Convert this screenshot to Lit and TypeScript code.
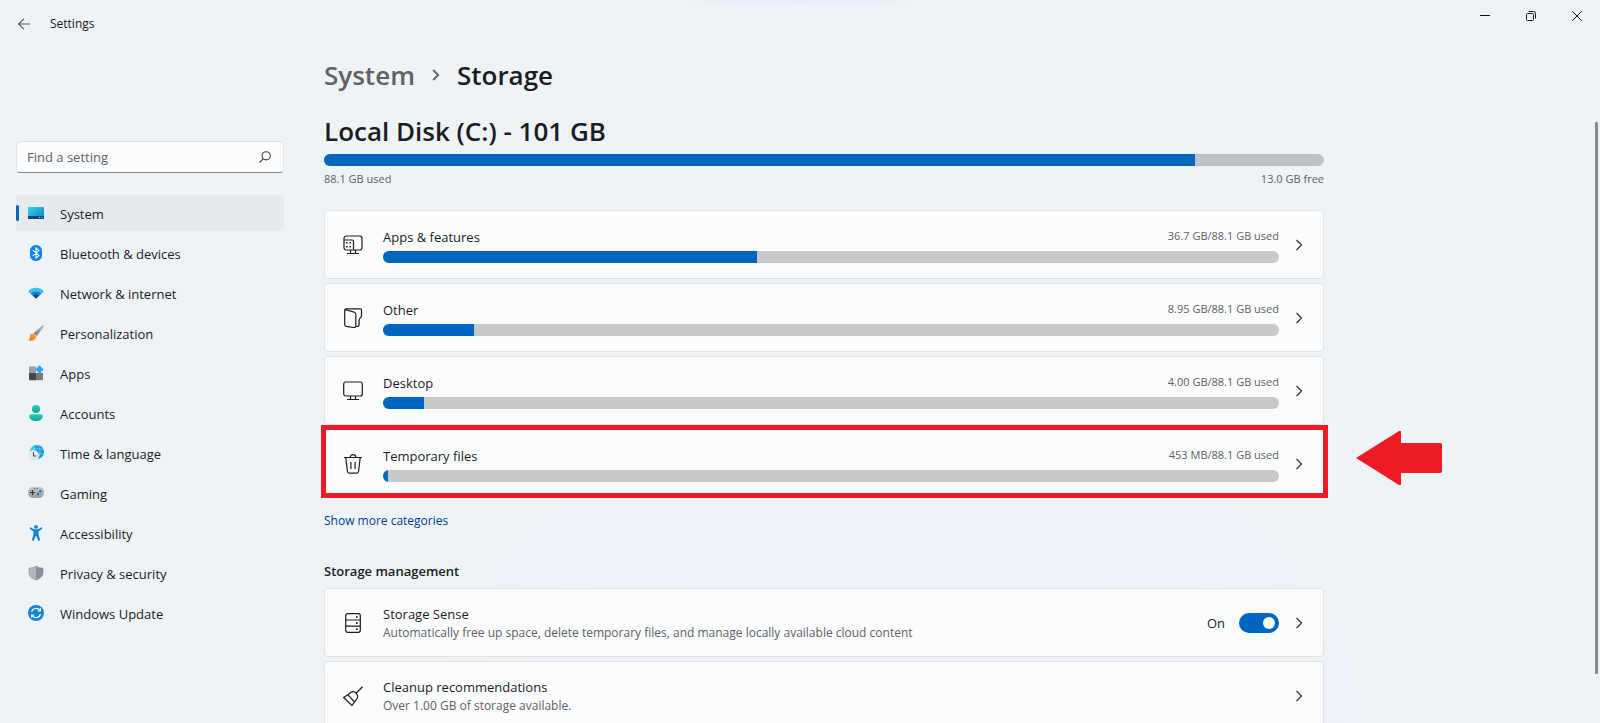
import { LitElement, html, css, svg, nothing } from "lit";
import { customElement, property, state } from "lit/decorators.js";
import { classMap } from "lit/directives/class-map.js";

const chevron = html`<svg class="chevron" width="16" height="16" viewBox="0 0 16 16" aria-hidden="true">
  <path d="M5.500 3 10.500 8l-5 5" fill="none" stroke="#303234" stroke-width="1.200" />
</svg>`;

const navIcons: Record<string, unknown> = {
  system: svg`
    <defs><linearGradient id="sys" x1="0" y1="0" x2="1" y2="1">
      <stop offset="0" stop-color="#35d8e8"/><stop offset="1" stop-color="#0f7bc9"/></linearGradient></defs>
    <rect x="0" y="2" width="16" height="12" rx="0.8" fill="url(#sys)"/>
    <path d="M0 11h16v2.2a.8.8 0 0 1-.8.8H.8a.8.8 0 0 1-.8-.8z" fill="#0b4a73"/>
    <path d="M11 12h1v1h-1zM13.2 12h1v1h-1z" fill="#b9e6f7"/>`,
  bluetooth: svg`
    <rect x="2" y="0" width="12" height="16" rx="5.6" fill="#0a84f5"/>
    <path d="M4.8 5.2 11 10.5 8 13V3l3 2.5-6.2 5.3" fill="none" stroke="#fff" stroke-width="1.1"/>`,
  network: svg`
    <path d="M0 6.200C4.400 1.600 11.600 1.600 16 6.200L13.600 8.600C10.500 5.600 5.500 5.600 2.400 8.600z" fill="#35c3ef"/>
    <path d="M2.400 8.600C5.500 5.400 10.500 5.400 13.600 8.600L11.500 10.600C9.500 8.700 6.500 8.700 4.500 10.600z" fill="#1584d8"/>
    <path d="M4.500 10.600C6.500 8.500 9.500 8.500 11.500 10.600L8 13.800z" fill="#0d4f9e"/>`,
  personalization: svg`
    <defs><linearGradient id="brush" x1="1" y1="0" x2="0" y2="1">
      <stop offset="0" stop-color="#c3c8cc"/><stop offset="1" stop-color="#6d747b"/></linearGradient>
      <linearGradient id="paint" x1="1" y1="0" x2="0" y2="1">
      <stop offset="0" stop-color="#ffad3b"/><stop offset="1" stop-color="#ee6a10"/></linearGradient></defs>
    <path d="M14.300.3c.9-.6 2.100.4 1.500 1.400L8.800 11 5.600 8.200z" fill="url(#brush)"/>
    <path d="M5.300 8.300 8.400 11.200C8.300 14.800 4 16.600.2 15.300 2 14.500 1.600 13 2 11c.4-1.800 2-2.900 3.300-2.700z" fill="url(#paint)"/>`,
  apps: svg`
    <path d="M1 1.500h7V8H1z" fill="#98a1a8"/><path d="M1 8h7v7.200H1.800a.8.8 0 0 1-.8-.8z" fill="#45494d"/>
    <path d="M8 8h7v6.400a.8.8 0 0 1-.8.8H8z" fill="#757b80"/>
    <rect x="8.500" y="1.500" width="6" height="6" rx="0.8" transform="rotate(45 11.500 4.500)" fill="#2aa7ee"/>`,
  accounts: svg`
    <defs><linearGradient id="acc" x1="0" y1="0" x2="0" y2="1">
      <stop offset="0" stop-color="#28cdb8"/><stop offset="1" stop-color="#12a596"/></linearGradient></defs>
    <circle cx="8" cy="4" r="4" fill="url(#acc)"/>
    <path d="M3 9.300h10c1 0 1.800.7 1.800 1.700 0 3-3 5-6.800 5s-6.800-2-6.800-5c0-1 .8-1.700 1.800-1.700z" fill="url(#acc)"/>`,
  time: svg`
    <circle cx="9" cy="7" r="7" fill="#1a94dc"/>
    <path d="M9 0a7 7 0 0 0-7 7h5c0-3 .6-5.500 2-7z" fill="#34c8df"/>
    <path d="M9 0c2 1.600 3 4 3 7s-1 5.400-3 7M3 4h12M9 8.800h6.500" fill="none" stroke="#63daf0" stroke-width="0.800"/>
    <circle cx="5.500" cy="10.500" r="5.500" fill="#e6e7e9"/>
    <path d="M5.500 7.200v3.800h2.800" fill="none" stroke="#45494d" stroke-width="1.100"/>`,
  gaming: svg`
    <defs><linearGradient id="pad" x1="0" y1="0" x2="0" y2="1">
      <stop offset="0" stop-color="#c2c5c9"/><stop offset="1" stop-color="#999da3"/></linearGradient></defs>
    <rect x="0" y="2" width="16" height="11" rx="5" fill="url(#pad)"/>
    <path d="M4.500 5v5M2 7.500h5" stroke="#2e3236" stroke-width="1.200"/>
    <path d="M6.200 3h1v1h-1zM8.800 3h1v1h-1z" fill="#4b4f53"/>
    <circle cx="10" cy="9" r="1.200" fill="#1670c4"/><circle cx="12.300" cy="6.200" r="1.200" fill="#1670c4"/>`,
  accessibility: svg`
    <circle cx="8" cy="1.900" r="1.900" fill="#1583db"/>
    <path d="M2.500 1.900C4 3.300 5.800 4.200 8 4.200s4-.9 5.500-2.300l1 1.400C13 4.900 11.700 5.800 10.600 6.200V9.500l1.600 5.700-1.800.8L8.300 11h-.6l-2.100 5-1.800-.8 1.600-5.700V6.200C4.300 5.800 3 4.900 1.500 3.300z" fill="#1583db"/>`,
  privacy: svg`
    <path d="M8 1C6 2.400 3.800 3 1 3v4.800C1 11.500 4 13.800 8 15z" fill="#b3b7bc"/>
    <path d="M8 1c2 1.400 4.200 2 7 2v4.800c0 3.700-3 6-7 7.200z" fill="#8c9198"/>
    <path d="M8 1c2 1.400 4.200 2 7 2v4.800c0 3.700-3 6-7 7.200-4-1.200-7-3.500-7-7.200V3c2.800 0 5-.6 7-2z" fill="none" stroke="#8a8f95" stroke-width="0.600"/>`,
  update: svg`
    <circle cx="8" cy="8" r="8" fill="#1583db"/>
    <path d="M3.600 7A4.600 4.600 0 0 1 12 5.600M12.400 9A4.600 4.600 0 0 1 4 10.400" fill="none" stroke="#fff" stroke-width="1.200"/>
    <path d="M12.400 3.200V6H9.600M3.600 12.800V10h2.800" fill="none" stroke="#fff" stroke-width="1.200"/>`,
};

const cardIcons: Record<string, unknown> = {
  apps: svg`
    <path d="M1 5V3.200C1 2 1.800 1 3.200 1h13.600C18 1 19 2 19 3.200v9.600c0 1.300-1 2.200-2.200 2.200H3.200C1.900 15 1 14 1 12.800V5h8.200c.8 0 1.300.5 1.300 1.300V15M7.500 15v3.400M12.500 15v3.400M4 18.500h12"/>
    <path d="M3 7h1.500v1.500H3zM6.500 7H8v1.500H6.500zM3 11h1.500v1.500H3zM6.500 11H8v1.500H6.500z" fill="#1b1c1d" stroke="none"/>`,
  other: svg`
    <path d="M1.700 2.500v14c0 1 .5 1.700 1.500 1.900l7.600 1.100c1.300.2 2-.6 2-1.700V6.200c0-1-.5-1.700-1.500-2L3.200 2C2.300 1.700 1.700 2 1.700 3V1.800C1.700 1.200 2.200.8 3 .8h14.200c.8 0 1.300.4 1.300 1.200v5.500c0 .8-.3 1.200-.8 1.900l-1 1.200c-.4.5-.6 1-.6 1.700v4c0 1.200-.8 2.200-2 2.200h-1.300"/>`,
  desktop: svg`
    <rect x="0.700" y="1" width="18.600" height="14" rx="2"/><path d="M7.500 15v3.500M12.500 15v3.500M4 18.500h12"/>`,
  trash: svg`
    <path d="M1 3.500h18M7.200 3.300C7.200 1.700 8.400.7 10 .7s2.800 1 2.800 2.600M2.800 3.500l1.600 13.800c.1 1.100.9 1.900 2 1.900h7.200c1.100 0 1.900-.8 2-1.900l1.600-13.800M7.900 8v7M12.100 8v7"/>`,
  drive: svg`
    <rect x="2.700" y="0.700" width="14.600" height="18.600" rx="2"/><path d="M2.700 7h14.600M2.700 13.200h14.600"/>
    <path d="M13 3.200h1.700v1.600H13zM13 9.300h1.700v1.600H13zM13 15.500h1.700v1.600H13z" fill="#1b1c1d" stroke="none"/>`,
  broom: svg`
    <path d="M19.600.7 13.300 7M6.500 7.500.7 11.500l8.200 8 4.400-5.800M6.500 7.500c2-2.100 4.700-2.200 6.500-.5 1.900 1.900 2.100 4.500.3 6.700M4.800 8.700l6.700 7.300"/>`,
};

interface Category {
  name: string;
  usage: string;
  percent: number;
  icon: string;
  marked?: boolean;
}

const shared = css`
  * { box-sizing: border-box; }
  button, input { font: inherit; color: inherit; }
  button { background: none; border: 0; padding: 0; text-align: left; }
  a { color: inherit; text-decoration: none; }
  h1, h2, h3, p { margin: 0; }
  svg { display: block; flex: none; }
`;

@customElement("usage-bar")
class UsageBar extends LitElement {
  @property({ type: Number }) percent = 0;
  @property() label = "";

  static styles = css`
    :host { display: block; }
    .track { height: 12px; border-radius: 6px; background: var(--track, #c8c9c8); overflow: hidden; }
    .fill { height: 100%; background: #0067c0; }
  `;

  render() {
    return html`<div class="track" role="progressbar" aria-label=${this.label} aria-valuenow=${this.percent}>
      <div class="fill" style="width:${this.percent}%"></div>
    </div>`;
  }
}

@customElement("settings-nav")
class SettingsNav extends LitElement {
  @state() private current = "system";

  private items = [
    ["system", "System"],
    ["bluetooth", "Bluetooth & devices"],
    ["network", "Network & internet"],
    ["personalization", "Personalization"],
    ["apps", "Apps"],
    ["accounts", "Accounts"],
    ["time", "Time & language"],
    ["gaming", "Gaming"],
    ["accessibility", "Accessibility"],
    ["privacy", "Privacy & security"],
    ["update", "Windows Update"],
  ];

  static styles = [shared, css`
    :host { display: block; }
    .search {
      display: flex; align-items: center; height: 32px; padding: 0 12px 0 10px;
      background: #fbfcfe; border: 1px solid #dfe4e9; border-bottom-color: #83878a; border-radius: 4px;
    }
    .search input {
      flex: 1; min-width: 0; border: 0; outline: 0; background: none; padding: 0; line-height: 20px;
    }
    .search input::placeholder { color: #626467; opacity: 1; }
    nav { display: flex; flex-direction: column; gap: 4px; margin-top: 22px; }
    .item { display: flex; align-items: center; gap: 16px; height: 36px; padding-left: 12px; border-radius: 4px; position: relative; line-height: 20px; }
    .name { padding-top: 2px; }
    .selected { background: #e5eaee; }
    .selected::before {
      content: ""; position: absolute; left: 0; top: 10px; width: 3px; height: 16px; border-radius: 2px; background: #0067c0;
    }
  `];

  render() {
    return html`
      <div class="search">
        <input type="text" aria-label="Find a setting" placeholder="Find a setting" />
        <button aria-label="Search">
          <svg width="12" height="12" viewBox="0 0 12 12"><g fill="none" stroke="#3c3e40" stroke-width="1.1">
            <circle cx="7.200" cy="4.800" r="4.100"/><path d="M4.300 7.700.5 11.500"/></g></svg>
        </button>
      </div>
      <nav>
        ${this.items.map(([id, name]) => html`
          <a href="#${id}" class=${classMap({ item: true, selected: id === this.current })} @click=${() => (this.current = id)}>
            <svg width="16" height="16" viewBox="0 0 16 16" aria-hidden="true">${navIcons[id]}</svg>
            <span class="name">${name}</span>
          </a>`)}
      </nav>`;
  }
}

@customElement("storage-page")
class StoragePage extends LitElement {
  @state() private sense = true;

  private categories: Category[] = [
    { name: "Apps & features", usage: "36.7 GB/88.1 GB used", percent: 41.7, icon: "apps" },
    { name: "Other", usage: "8.95 GB/88.1 GB used", percent: 10.16, icon: "other" },
    { name: "Desktop", usage: "4.00 GB/88.1 GB used", percent: 4.54, icon: "desktop" },
    { name: "Temporary files", usage: "453 MB/88.1 GB used", percent: 0.51, icon: "trash", marked: true },
  ];

  static styles = [shared, css`
    :host { display: block; max-width: 1000px; }
    .crumbs { display: flex; align-items: center; gap: 17px; font-size: 26px; font-weight: 600; line-height: 36px; }
    .crumbs a { color: #5f6163; }
    .crumbs h1 { font: inherit; }
    .disk { margin: 20px 0 5px; font-size: 26px; font-weight: 600; line-height: 36px; }
    .total { --track: #bec2c6; }
    .legend { display: flex; justify-content: space-between; margin: 5px 0 23px; font-size: 11px; line-height: 16px; color: #5f6163; }
    .cards { display: flex; flex-direction: column; gap: 4px; }
    .card {
      position: relative; display: flex; align-items: center; width: 100%; height: 69px; padding: 0 16px 0 18px;
      background: #fbfcfe; border: 1px solid #dee4ea; border-radius: 4px; line-height: 20px;
    }
    .glyph { fill: none; stroke: #1b1c1d; stroke-width: 1.2; }
    .body { flex: 1; min-width: 0; display: block; margin: 0 12px 0 20px; }
    .line { display: flex; justify-content: space-between; align-items: flex-start; margin-bottom: 4px; }
    .usage { font-size: 11px; line-height: 18px; color: #5f6163; }
    .desc { font-size: 12px; line-height: 17px; color: #606264; }
    .marker { position: absolute; inset: -5px -5px -1px -4px; border: 5px solid #ed1c24; pointer-events: none; }
    .pointer { position: absolute; left: calc(100% + 33px); top: 1px; }
    .more { display: inline-block; margin: 15px 0 32px; font-size: 12px; line-height: 16px; color: #003e92; }
    .section { font-size: 13px; font-weight: 600; line-height: 20px; margin-bottom: 7px; }
    .switch { display: flex; align-items: center; gap: 14px; margin-right: 12px; }
    .switch input {
      appearance: none; margin: 0; width: 40px; height: 20px; padding: 4px; border-radius: 10px; background: #0067c0; display: flex; justify-content: flex-end;
    }
    .switch input::before { content: ""; width: 12px; height: 12px; border-radius: 50%; background: #fff; }
    .switch input:not(:checked) { background: #8a8d90; justify-content: flex-start; }
  `];

  private glyph(name: string) {
    return html`<svg class="glyph" width="20" height="20" viewBox="0 0 20 20" aria-hidden="true">${cardIcons[name]}</svg>`;
  }

  render() {
    return html`
      <div class="crumbs">
        <a href="#system">System</a>
        <svg width="8" height="12" viewBox="0 0 8 12" aria-hidden="true"><path d="M1.200 1 6.200 6l-5 5" fill="none" stroke="#5f6163" stroke-width="1.800"/></svg>
        <h1>Storage</h1>
      </div>
      <h2 class="disk">Local Disk (C:) - 101 GB</h2>
      <usage-bar class="total" label="Local Disk (C:)" .percent=${87.1}></usage-bar>
      <div class="legend"><span>88.1 GB used</span><span>13.0 GB free</span></div>
      <div class="cards">
        ${this.categories.map((c) => html`
          <button class="card">
            ${this.glyph(c.icon)}
            <span class="body">
              <span class="line"><span>${c.name}</span><span class="usage">${c.usage}</span></span>
              <usage-bar label=${c.name} .percent=${c.percent}></usage-bar>
            </span>
            ${chevron}
            ${c.marked ? html`
              <span class="marker"></span>
              <svg class="pointer" width="86" height="54" viewBox="0 0 86 54" aria-hidden="true">
                <path d="M0 27 43 0h2v12h40l1 1v28l-1 1H45v12h-2z" fill="#ed1c24"/></svg>` : nothing}
          </button>`)}
      </div>
      <a class="more" href="#more">Show more categories</a>
      <h3 class="section">Storage management</h3>
      <div class="cards">
        <div class="card">
          ${this.glyph("drive")}
          <div class="body">
            <p>Storage Sense</p>
            <p class="desc">Automatically free up space, delete temporary files, and manage locally available cloud content</p>
          </div>
          <label class="switch">
            <span>${this.sense ? "On" : "Off"}</span>
            <input type="checkbox" role="switch" .checked=${this.sense}
              @change=${(e: Event) => (this.sense = (e.target as HTMLInputElement).checked)} />
          </label>
          <button aria-label="Open Storage Sense">${chevron}</button>
        </div>
        <button class="card">
          ${this.glyph("broom")}
          <div class="body">
            <p>Cleanup recommendations</p>
            <p class="desc">Over 1.00 GB of storage available.</p>
          </div>
          ${chevron}
        </button>
      </div>`;
  }
}

@customElement("app-root")
class AppRoot extends LitElement {
  static styles = [shared, css`
    :host {
      display: flex; flex-direction: column; height: 100vh; overflow: hidden; position: relative;
      font-family: "Open Sans", "Noto Sans", sans-serif; font-size: 13px; line-height: 20px; color: #1b1c1d;
      background:
        radial-gradient(ellipse 130px 5px at 50% 0, #e6ebf5, transparent),
        radial-gradient(ellipse 30% 45% at 56% 100%, #f0f2fb 60%, transparent),
        #eef3f8;
    }
    .titlebar { display: flex; justify-content: space-between; height: 48px; flex: none; }
    .left { display: flex; align-items: center; gap: 20px; padding-left: 18px; font-size: 12px; line-height: 16px; }
    .controls { display: flex; height: 32px; }
    .controls button { width: 46px; display: flex; align-items: center; justify-content: center; }
    .columns { display: flex; flex: 1; min-height: 0; }
    .sidebar { width: 300px; flex: none; padding: 93px 16px 0; }
    main { flex: 1; min-width: 0; padding: 9px 24px 0; overflow: hidden; }
    .rail { width: 5px; flex: none; padding: 74px 2px 49px 0; display: flex; }
    .thumb { width: 3px; flex: none; background: #85888c; border-radius: 1px; }
  `];

  render() {
    return html`
      <header class="titlebar">
        <div class="left">
          <button aria-label="Back"><svg width="12" height="12" viewBox="0 0 12 12">
            <path d="M12 6H.8M5.800.8.6 6l5.200 5.200" fill="none" stroke="#55585a" stroke-width="1.100"/></svg></button>
          <span>Settings</span>
        </div>
        <div class="controls">
          <button aria-label="Minimize"><svg width="10" height="10" viewBox="0 0 10 10"><path d="M0 4.500h10" stroke="#111"/></svg></button>
          <button aria-label="Restore"><svg width="10" height="10" viewBox="0 0 10 10"><g fill="none" stroke="#111">
            <rect x="0.500" y="2.500" width="7" height="7" rx="1"/><path d="M2.500.5h5A2 2 0 0 1 9.500 2.500v5"/></g></svg></button>
          <button aria-label="Close"><svg width="10" height="10" viewBox="0 0 10 10"><path d="M.2.2l9.600 9.600M9.800.2.2 9.800" stroke="#111"/></svg></button>
        </div>
      </header>
      <div class="columns">
        <aside class="sidebar"><settings-nav></settings-nav></aside>
        <main><storage-page></storage-page></main>
        <div class="rail"><div class="thumb"></div></div>
      </div>`;
  }
}
